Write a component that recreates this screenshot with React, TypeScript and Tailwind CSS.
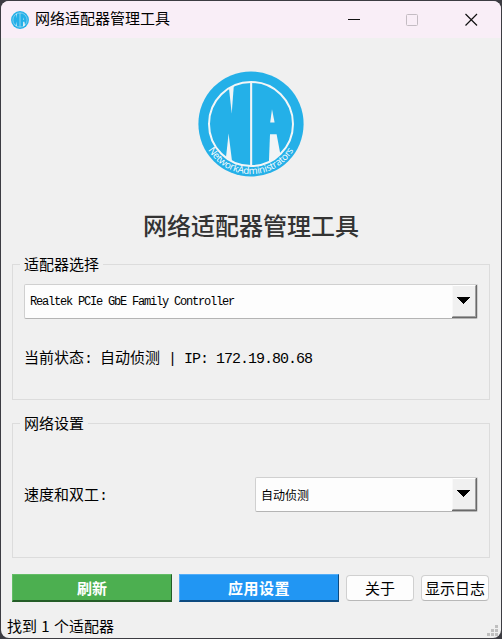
import type { ReactNode } from "react";

const ui = "font-['Noto_Sans_CJK_SC',sans-serif]";

/** Round brand mark: blue disc, pale ring, and a two-letter monogram cut by slits. */
function Logo({ className, withName = true }: { className: string; withName?: boolean }) {
  return (
    <svg viewBox="-53 -53 106 106" className={className}>
      <circle r="52.6" fill="#24b0e8" />
      <circle r="42" fill="none" stroke="#f3f6f7" strokeWidth={withName ? 2 : 2.5} />
      <g fill="#f1f4f6">
        <rect x={withName ? -0.9 : -1.5} y="-42" width={withName ? 2.1 : 3} height="84" />
        <path d="M-22-35.8L-17.2-38L-19.3-10.5Z" />
        <path d="M-22.4 9.5L-19 37L-25 33.5Z" />
        <path d="M21-14.7L23.6-1.6H19.2Z" />
        <path d="M19 10.3H25.6L29.4 30.3Q24 35.5 17.9 38.2Z" />
      </g>
      {withName && (
        <>
          <path id="name-arc" d="M-42.8 26A50 50 0 0 0 42.8 26" fill="none" />
          <text className="font-['Open_Sans',sans-serif]" fontSize="9.8" fill="#fff">
            <textPath href="#name-arc" textLength="102" lengthAdjust="spacing">
              NetworkAdministrators
            </textPath>
          </text>
        </>
      )}
    </svg>
  );
}

function TitleBar() {
  return (
    <header className="flex h-[37px] shrink-0 items-center bg-[#f9eef7] pl-[10px] pr-[23px]">
      <Logo className="size-[18px]" withName={false} />
      <h1 className="mb-[3px] ml-[6px] flex-1 text-[15px] leading-5">网络适配器管理工具</h1>
      <div className="flex items-center gap-[46px]">
        <svg className="size-[13px]" viewBox="0 0 13 13">
          <path d="M1 6.5H13" stroke="#111" />
        </svg>
        <svg className="size-[13px]" viewBox="0 0 13 13">
          <rect x=".5" y="1.5" width="11" height="11" rx="1" fill="none" stroke="#c4bcc3" />
        </svg>
        <svg className="size-[13px]" viewBox="0 0 13 13">
          <path d="M.5 1L12 12.5M12 1L.5 12.5" stroke="#111" strokeWidth="1.2" />
        </svg>
      </div>
    </header>
  );
}

function Group({ title, className, children }: { title: string; className: string; children: ReactNode }) {
  return (
    <section className={`flex flex-col border border-[#dcdcdc] px-[11px] ${className}`}>
      <h3 className="-ml-1 -mt-[11px] h-5 self-start bg-[#f0f0f0] px-1 text-[15px] leading-5">{title}</h3>
      {children}
    </section>
  );
}

function Combo({ className, children }: { className: string; children: ReactNode }) {
  return (
    <div
      className={`flex h-[35px] rounded-[2px] border border-[#d0d0d0] border-b-[#b4b4b4] bg-[#fdfdfd] ${className}`}
    >
      <div className="flex flex-1 items-center pl-[5px]">{children}</div>
      <div className="flex w-[25px] justify-center border-b border-r border-[#696969] bg-[#f0f0f0]">
        <div className="flex flex-1 justify-start border-b border-l border-r border-t border-b-[#a0a0a0] border-l-[#f8f8f8] border-r-[#a0a0a0] border-t-white pl-1 pt-[11px]">
          <svg className="h-[7px] w-[13px]" viewBox="0 0 13 7" shapeRendering="crispEdges">
            <path d="M0 0H13L6.5 7Z" />
          </svg>
        </div>
      </div>
    </div>
  );
}

/** Half-width text on a fixed 8px grid. */
function Mono({ children }: { children: string }) {
  return (
    <span className="whitespace-pre font-['Liberation_Mono',monospace] text-[15px] tracking-[-1.002px]">
      {children}
    </span>
  );
}

export default function App() {
  return (
    <div className="h-[639px] w-[502px] bg-[#3c3c42] p-px">
      <main
        className={`flex h-[637px] w-[500px] flex-col overflow-hidden rounded-[8px] bg-[#f0f0f0] text-black ${ui}`}
      >
        <TitleBar />
        <div className="flex flex-1 flex-col pl-[11px] pr-[11px]">
          <Logo className="mt-[33px] size-[106px] self-center" />
          <h2 className="mt-[30px] h-9 text-center text-[24px] font-medium leading-9 text-[#333]">
            网络适配器管理工具
          </h2>

          <Group title="适配器选择" className="mt-[21px] h-[136px]">
            <Combo className="mt-[10px]">
              <span className="pt-px font-['Liberation_Mono',monospace] text-[12px] tracking-[-1.2px]">
                Realtek PCIe GbE Family Controller
              </span>
            </Combo>
            <p className="mt-[28px] h-5 whitespace-pre text-[15px] leading-5">
              当前状态<Mono>: </Mono>自动侦测<Mono> | IP: 172.19.80.68</Mono>
            </p>
          </Group>

          <Group title="网络设置" className="mt-[23px] h-[135px]">
            <div className="mt-[44px] flex items-center justify-between">
              <p className="mb-[2px] h-5 text-[15px] leading-5">
                速度和双工<Mono>:</Mono>
              </p>
              <Combo className="w-[223px]">
                <span className="text-[12px]">自动侦测</span>
              </Combo>
            </div>
          </Group>

          <div className="mt-4 flex h-7 items-center gap-[7px]">
            <button className="h-7 w-[160px] border border-b-2 border-[#63bd66] border-b-[#245d27] border-r-[#245d27] bg-[#4caf50] text-[15px] font-bold leading-5 text-white">
              刷新
            </button>
            <button className="h-7 w-[160px] border border-b-2 border-[#52adf8] border-b-[#0c4a80] border-r-[#0c4a80] bg-[#2196f3] text-[15px] font-bold leading-5 tracking-[0.5px] text-white">
              应用设置
            </button>
            <button className="h-[26px] w-[68px] rounded-[4px] border border-[#d0d0d0] border-b-[#b8b8b8] bg-[#fdfdfd] text-[15px] leading-5">
              关于
            </button>
            <button className="h-[26px] w-[68px] rounded-[4px] border border-[#d0d0d0] border-b-[#b8b8b8] bg-[#fdfdfd] text-[15px] leading-5">
              显示日志
            </button>
          </div>
        </div>
        <footer className="flex h-[36px] shrink-0 items-end justify-between pb-[2px] pl-[6px] pr-[3px]">
          <span className="text-[15px] leading-5 [word-spacing:1px]">找到 1 个适配器</span>
          <svg className="size-[11px]" viewBox="0 0 11 11" fill="#bfbfbf" shapeRendering="crispEdges">
            <path d="M8 0h3v3h-3zM4 4h3v3h-3zM8 4h3v3h-3zM0 8h3v3h-3zM4 8h3v3h-3zM8 8h3v3h-3z" />
          </svg>
        </footer>
      </main>
    </div>
  );
}
